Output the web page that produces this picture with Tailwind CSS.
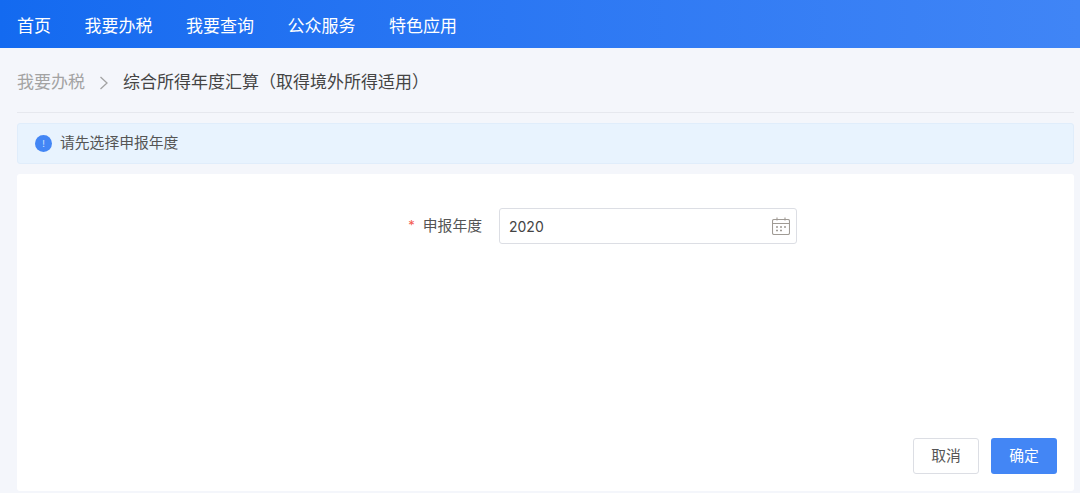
<!DOCTYPE html>
<html lang="zh-CN">
<head>
    <meta charset="UTF-8">
    <meta name="viewport" content="width=device-width, initial-scale=1.0">
    <title>综合所得年度汇算</title>
    <script src="https://cdn.jsdelivr.net/npm/@tailwindcss/browser@4"></script>
</head>
<body class="h-[493px] overflow-hidden bg-[#f4f6fb] font-['Inter','Noto_Sans_CJK_SC',sans-serif] text-[#444]">

    <!-- 顶部导航 -->
    <nav class="flex h-[48px] items-center gap-[33.5px] bg-gradient-to-r from-[#136af0] to-[#4085f6] pl-[17px] pt-[6px] text-[17px] text-white">
        <a href="#">首页</a>
        <a href="#">我要办税</a>
        <a href="#">我要查询</a>
        <a href="#">公众服务</a>
        <a href="#">特色应用</a>
    </nav>

    <main class="pl-[17px] pr-[6px]">
        <!-- 面包屑 -->
        <div class="flex h-[65px] items-center border-b border-[#e6e8ee] pt-[5px] text-[17px]">
            <span class="text-[#a3a3a3]">我要办税</span>
            <svg class="ml-[14px] mr-[14px] h-[16px] w-[10px]" viewBox="0 0 10 16" fill="none" stroke="#a3a3a3" stroke-width="1.3">
                <path d="M1.5 2l6.5 6-6.5 6"/>
            </svg>
            <span class="text-[#444]">综合所得年度汇算（取得境外所得适用）</span>
        </div>

        <!-- 提示 -->
        <div class="mt-[10px] flex h-[41px] items-center rounded-[3px] border border-[#e0edfb] bg-[#e8f3fe] pl-[17px] text-[14.8px] text-[#555]">
            <span class="flex h-[17px] w-[17px] items-center justify-center rounded-full bg-[#4386f5] text-[9px] text-[#cfe0fc]">!</span>
            <span class="ml-[8px]">请先选择申报年度</span>
        </div>

        <!-- 表单 -->
        <div class="relative mt-[10px] h-[317px] rounded-[3px] bg-white">
            <div class="flex items-center pt-[34px]">
                <label class="flex w-[465px] items-center justify-end text-[14.8px] text-[#555]"><span class="mr-[8px] text-[13px] text-[#f4594e]">*</span>申报年度</label>
                <div class="ml-[17px] flex h-[36px] w-[298px] items-center justify-between rounded-[3px] border border-[#dcdee4] pl-[9px] pr-[6px] text-[#444]">
                    <span class="text-[14px]">2020</span>
                    <svg class="mb-[1px] h-[18px] w-[18px]" viewBox="0 0 18 18" fill="none" stroke="#a09b95" stroke-width="1.1">
                        <rect x="0.5" y="2.5" width="17" height="15" rx="1.5"/>
                        <path d="M0.5 6.5h17M5 0.5v3M13 0.5v3"/>
                        <path d="M4 10h2M8 10h2M12 10h2M4 13.5h2M8 13.5h2" stroke-width="1.3"/>
                    </svg>
                </div>
            </div>
            <div class="absolute bottom-[17px] right-[17px] flex gap-[12px] text-[14.8px]">
                <button class="h-[36px] w-[66px] rounded-[3px] border border-[#dcdee4] bg-white text-[#555]">取消</button>
                <button class="h-[36px] w-[66px] rounded-[3px] bg-[#4386f5] text-white">确定</button>
            </div>
        </div>
    </main>
</body>
</html>
